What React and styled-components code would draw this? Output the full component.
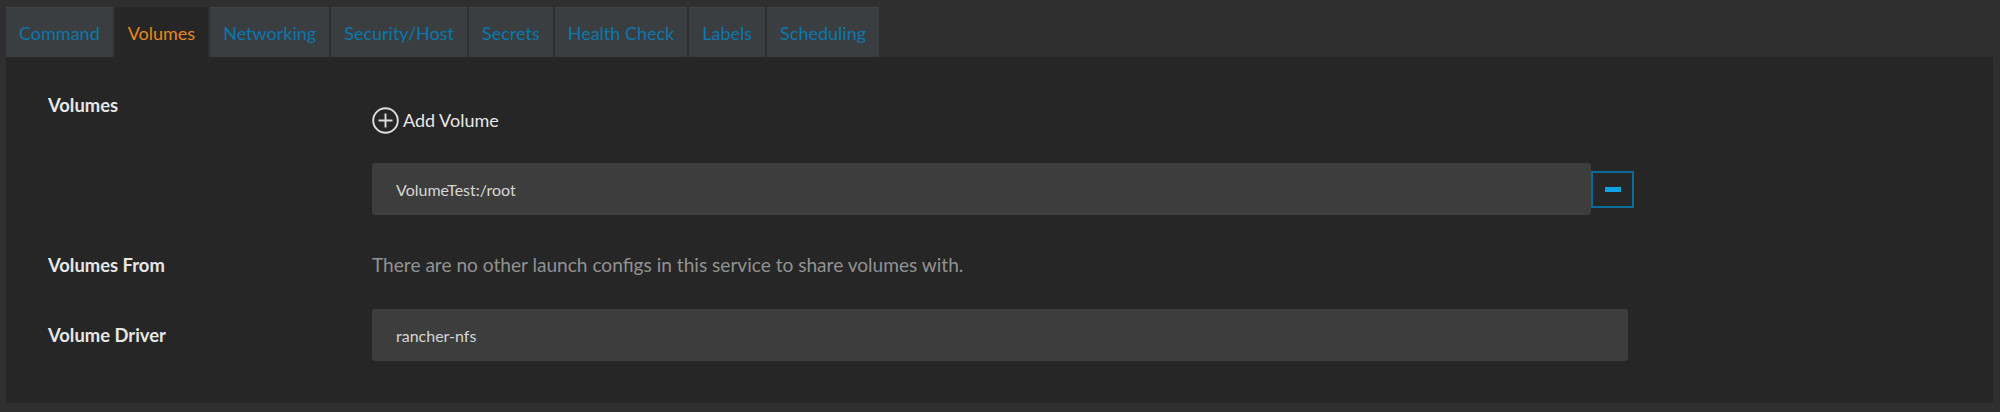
import React from "react";
import styled, { createGlobalStyle } from "styled-components";

const Global = createGlobalStyle`
  html, body { margin: 0; padding: 0; background: #2f2f2f; }
  body { font-family: Lato, "Open Sans", "Liberation Sans", sans-serif; }
  * { box-sizing: border-box; }
`;

const Page = styled.div`
  padding: 7px 7px 9px 6px;
  height: 412px;
  display: flex;
  flex-direction: column;
`;

const TabBar = styled.div`
  display: flex;
  gap: 2px;
  height: 50px;
`;

const Tab = styled.div`
  display: flex;
  align-items: center;
  padding: 0 13px;
  font-size: 18px;
  color: ${(p) => (p.$active ? "#e8871f" : "#0b77ae")};
  background: ${(p) => (p.$active ? "#262626" : "#3a3e40")};
  border-top: 1px solid ${(p) => (p.$active ? "#262626" : "#414547")};
  white-space: nowrap;
`;

const Panel = styled.div`
  flex: 1;
  background: #262626;
  padding: 36px 42px 0 42px;
`;

const Row = styled.div`
  display: grid;
  grid-template-columns: 324px 1256px;
  align-items: ${(p) => p.$align || "start"};
  margin-top: ${(p) => p.$mt || 0}px;
`;

const Label = styled.div`
  font-size: 18.4px;
  line-height: 24px;
  font-weight: 700;
  color: #e6e6e6;
`;

const Content = styled.div`
  display: flex;
  flex-direction: column;
`;

const AddButton = styled.div`
  display: flex;
  align-items: center;
  gap: 4px;
  margin-top: 14px;
  font-size: 18px;
  color: #e6e6e6;
  height: 26px;
`;

const VolumeRow = styled.div`
  display: flex;
  align-items: center;
  margin-top: 30px;
  width: 1262px;
`;

const Input = styled.div`
  flex: 1;
  height: 52px;
  display: flex;
  align-items: center;
  padding: 0 24px;
  background: #3d3d3d;
  border-radius: 3px;
  font-size: 16px;
  color: #d6d6d6;
`;

const RemoveButton = styled.div`
  width: 43px;
  height: 37px;
  border: 2px solid #0a6a99;
  display: flex;
  align-items: center;
  justify-content: center;
  background: #262626;
`;

const MinusBar = styled.span`
  display: block;
  width: 16px;
  height: 5px;
  background: #0fa3e6;
`;

const Help = styled.div`
  font-size: 19.1px;
  line-height: 24px;
  color: #929292;
`;

const PlusCircle = () => (
  <svg width="27" height="27" viewBox="0 0 27 27">
    <circle cx="13.5" cy="13.5" r="12.3" fill="none" stroke="#dedede" strokeWidth="1.9" />
    <path d="M13.5 6.5v14M6.5 13.5h14" stroke="#dedede" strokeWidth="1.9" />
  </svg>
);

const tabs = ["Command", "Volumes", "Networking", "Security/Host", "Secrets", "Health Check", "Labels", "Scheduling"];

export default function App() {
  return (
    <>
      <Global />
      <Page>
        <TabBar>
          {tabs.map((t) => (
            <Tab key={t} $active={t === "Volumes"}>{t}</Tab>
          ))}
        </TabBar>
        <Panel>
          <Row>
            <Label>Volumes</Label>
            <Content>
              <AddButton>
                <PlusCircle />
                Add Volume
              </AddButton>
              <VolumeRow>
                <Input>VolumeTest:/root</Input>
                <RemoveButton>
                  <MinusBar />
                </RemoveButton>
              </VolumeRow>
            </Content>
          </Row>
          <Row $mt={38}>
            <Label>Volumes From</Label>
            <Help>There are no other launch configs in this service to share volumes with.</Help>
          </Row>
          <Row $mt={32} $align="center">
            <Label>Volume Driver</Label>
            <Input>rancher-nfs</Input>
          </Row>
        </Panel>
      </Page>
    </>
  );
}
